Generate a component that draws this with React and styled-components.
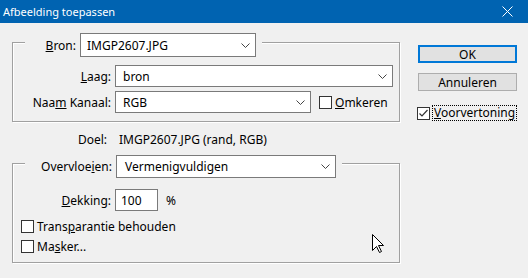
import React from 'react';
import styled, { createGlobalStyle } from 'styled-components';

const Global = createGlobalStyle`
  html, body { margin: 0; padding: 0; }
  body {
    background: #F0F0F0;
    font-family: "Noto Sans", "DejaVu Sans", sans-serif;
    font-size: 12px;
    color: #000;
  }
`;

const Window = styled.div`
  position: relative;
  width: 528px;
  height: 278px;
  overflow: hidden;
  background: #F0F0F0;
  display: flex;
  flex-direction: column;
`;

const TitleBar = styled.div`
  height: 23px;
  flex: none;
  background: #0063B1;
  color: #fff;
  display: flex;
  align-items: center;
  justify-content: space-between;
  padding: 0 15px 0 3px;
  font-size: 11px;
  line-height: 1;
`;

const Body = styled.div`
  display: flex;
  padding-left: 12px;
  gap: 18px;
`;

const LeftCol = styled.div`
  width: 388px;
  display: flex;
  flex-direction: column;
`;

const RightCol = styled.div`
  width: 99px;
  display: flex;
  flex-direction: column;
  padding-top: 22px;
`;

const Group = styled.div`
  margin-top: ${p => p.$top}px;
  border: 1px solid #A0A0A0;
  box-shadow: inset 1px 1px 0 #fff, 1px 1px 0 #fff;
  padding: 0 6px 8px 0;
  display: flex;
  flex-direction: column;
  align-items: flex-start;
`;

const Legend = styled.div`
  margin: ${p => p.$shift}px 0 0 12px;
  padding-right: 6px;
  background: #F0F0F0;
  display: flex;
  align-items: center;
  gap: 4px;
`;

const Label = styled.span`
  width: ${p => p.$w}px;
  flex: none;
  text-align: right;
  white-space: nowrap;
`;

const FieldRow = styled.div`
  margin-top: ${p => p.$top}px;
  display: flex;
  align-items: center;
  gap: 4px;
`;

const Combo = styled.div`
  box-sizing: border-box;
  width: ${p => p.$w}px;
  height: ${p => p.$h}px;
  border: 1px solid #7A7A7A;
  background: #fff;
  display: flex;
  align-items: center;
  justify-content: space-between;
  padding: 0 5px 0 ${p => p.$pl || 6}px;
  white-space: nowrap;
`;

const TextBox = styled.div`
  box-sizing: border-box;
  width: 43px;
  height: 22px;
  border: 1px solid #7A7A7A;
  background: #fff;
  display: flex;
  align-items: center;
  padding-left: 5px;
`;

const Percent = styled.span`
  margin-left: 4px;
`;

const CheckRow = styled.label`
  margin-top: ${p => p.$top || 0}px;
  margin-left: ${p => p.$left || 0}px;
  height: 16px;
  display: flex;
  align-items: center;
  gap: 3px;
  white-space: nowrap;
`;

const Box = styled.span`
  box-sizing: border-box;
  width: 13px;
  height: 13px;
  flex: none;
  border: 1px solid #333;
  background: #fff;
  display: flex;
  align-items: center;
  justify-content: center;
`;

const Focus = styled.span`
  outline: 1px dotted #000;
  outline-offset: 0;
  padding: 0 1px;
  line-height: 14px;
`;

const InfoRow = styled.div`
  margin-top: 9px;
  height: 16px;
  display: flex;
  align-items: center;
  gap: 12px;
`;

const Button = styled.div`
  box-sizing: border-box;
  height: 18px;
  margin-bottom: ${p => p.$mb || 0}px;
  background: #E1E1E1;
  border: ${p => (p.$primary ? '2px solid #0078D7' : '1px solid #ADADAD')};
  display: flex;
  align-items: center;
  justify-content: center;
`;

const Cursor = styled.svg`
  position: absolute;
  left: 372px;
  top: 234px;
`;

const Chevron = () => (
  <svg width="9" height="5" viewBox="0 0 9 5">
    <path d="M0.5 0.5 L4.5 4.5 L8.5 0.5" fill="none" stroke="#444" strokeWidth="1" />
  </svg>
);

const Check = () => (
  <svg width="11" height="11" viewBox="0 0 11 11">
    <path d="M1.5 5.5 L4 8 L9.5 2" fill="none" stroke="#333" strokeWidth="1.2" />
  </svg>
);

const Close = () => (
  <svg width="11" height="11" viewBox="0 0 11 11">
    <path d="M0.5 0.5 L10.5 10.5 M10.5 0.5 L0.5 10.5" stroke="#fff" strokeWidth="1" />
  </svg>
);

export default function App() {
  return (
    <Window>
      <Global />
      <TitleBar>
        <span>Afbeelding toepassen</span>
        <Close />
      </TitleBar>
      <Body>
        <LeftCol>
          <Group $top={19}>
            <Legend $shift={-10}>
              <Label $w={51}><u>B</u>ron:</Label>
              <Combo $w={176} $h={24}>
                <span>IMGP2607.JPG</span>
                <Chevron />
              </Combo>
            </Legend>
            <FieldRow $top={8}>
              <Label $w={98}><u>L</u>aag:</Label>
              <Combo $w={278} $h={22} $pl={7}>
                <span>bron</span>
                <Chevron />
              </Combo>
            </FieldRow>
            <FieldRow $top={4}>
              <Label $w={98}>Naa<u>m</u> Kanaal:</Label>
              <Combo $w={196} $h={22} $pl={7}>
                <span>RGB</span>
                <Chevron />
              </Combo>
              <CheckRow $left={4}>
                <Box />
                <span><u>O</u>mkeren</span>
              </CheckRow>
            </FieldRow>
          </Group>

          <InfoRow>
            <Label $w={95}>Doel:</Label>
            <span>IMGP2607.JPG (rand, RGB)</span>
          </InfoRow>

          <Group $top={16}>
            <Legend $shift={-9}>
              <Label $w={87}>Overvloe<u>i</u>en:</Label>
              <Combo $w={220} $h={23} $pl={8}>
                <span>Vermenigvuldigen</span>
                <Chevron />
              </Combo>
            </Legend>
            <FieldRow $top={11}>
              <Label $w={98}><u>D</u>ekking:</Label>
              <TextBox>100</TextBox>
              <Percent>%</Percent>
            </FieldRow>
            <CheckRow $top={7} $left={8}>
              <Box />
              <span>Trans<u>p</u>arantie behouden</span>
            </CheckRow>
            <CheckRow $top={4} $left={8}>
              <Box />
              <span>Ma<u>s</u>ker...</span>
            </CheckRow>
          </Group>
        </LeftCol>

        <RightCol>
          <Button $primary $mb={10}>OK</Button>
          <Button $mb={14}>Annuleren</Button>
          <CheckRow $left={-1}>
            <Box><Check /></Box>
            <Focus><u>V</u>oorvertoning</Focus>
          </CheckRow>
        </RightCol>
      </Body>

      <Cursor width="13" height="20" viewBox="0 0 13 20">
        <path
          d="M0.5 0.5 L0.5 16.5 L4.5 12.5 L7.5 18.5 L9.5 17.5 L6.5 11.5 L11.5 11.5 Z"
          fill="#fff"
          stroke="#000"
          strokeWidth="1"
          strokeLinejoin="miter"
        />
      </Cursor>
    </Window>
  );
}
